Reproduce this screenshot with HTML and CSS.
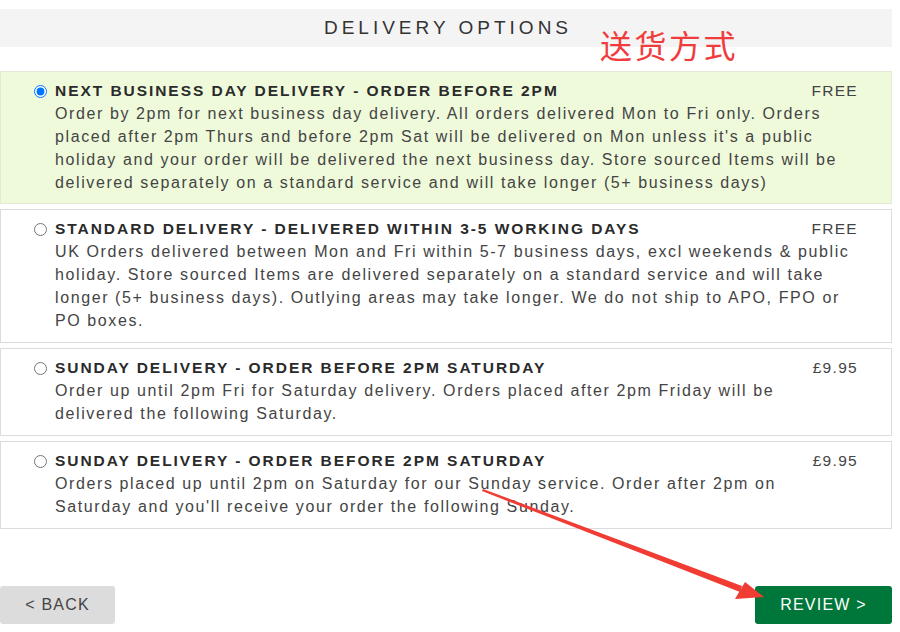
FILE: index.html
```html
<!DOCTYPE html>
<html>
<head>
<meta charset="utf-8">
<link rel="stylesheet" href="styles.css">
</head>
<body>
<div class="page">
  <div class="header">
    <h1 class="title">DELIVERY OPTIONS</h1>
  </div>
  <div class="note">送货方式</div>

  <div class="options">
    <label class="option selected">
      <input type="radio" name="del" class="radio" checked>
      <div class="content">
        <div class="head"><span class="name">NEXT BUSINESS DAY DELIVERY - ORDER BEFORE 2PM</span><span class="price">FREE</span></div>
        <p class="desc">Order by 2pm for next business day delivery. All orders delivered Mon to Fri only. Orders<br>placed after 2pm Thurs and before 2pm Sat will be delivered on Mon unless it's a public<br>holiday and your order will be delivered the next business day. Store sourced Items will be<br>delivered separately on a standard service and will take longer (5+ business days)</p>
      </div>
    </label>
    <label class="option">
      <input type="radio" name="del" class="radio">
      <div class="content">
        <div class="head"><span class="name">STANDARD DELIVERY - DELIVERED WITHIN 3-5 WORKING DAYS</span><span class="price">FREE</span></div>
        <p class="desc">UK Orders delivered between Mon and Fri within 5-7 business days, excl weekends &amp; public<br>holiday. Store sourced Items are delivered separately on a standard service and will take<br>longer (5+ business days). Outlying areas may take longer. We do not ship to APO, FPO or<br>PO boxes.</p>
      </div>
    </label>
    <label class="option">
      <input type="radio" name="del" class="radio">
      <div class="content">
        <div class="head"><span class="name">SUNDAY DELIVERY - ORDER BEFORE 2PM SATURDAY</span><span class="price">£9.95</span></div>
        <p class="desc">Order up until 2pm Fri for Saturday delivery. Orders placed after 2pm Friday will be<br>delivered the following Saturday.</p>
      </div>
    </label>
    <label class="option">
      <input type="radio" name="del" class="radio">
      <div class="content">
        <div class="head"><span class="name">SUNDAY DELIVERY - ORDER BEFORE 2PM SATURDAY</span><span class="price">£9.95</span></div>
        <p class="desc">Orders placed up until 2pm on Saturday for our Sunday service. Order after 2pm on<br>Saturday and you'll receive your order the following Sunday.</p>
      </div>
    </label>
  </div>

  <div class="actions">
    <button class="btn back">&lt; BACK</button>
    <button class="btn review">REVIEW &gt;</button>
  </div>

  <svg class="arrow" width="900" height="632" viewBox="0 0 900 632">
    <polygon points="482,491 483,489 742,586 740,592" fill="#f03c32"/>
    <polygon points="764,597 735,599 745,582" fill="#f03c32"/>
  </svg>
</div>
</body>
</html>
```
FILE: styles.css
```css
* { box-sizing: border-box; }
html, body { margin: 0; padding: 0; background: #fff; }
body { font-family: "Liberation Sans", Arial, sans-serif; color: #444; }
.page { position: relative; width: 900px; height: 632px; padding-top: 9px; }
.header {
  width: 892px; height: 38px; background: #f4f4f4;
  display: flex; align-items: center; justify-content: center;
}
.title {
  margin: 0; font-weight: normal; font-size: 19px; letter-spacing: 4px;
  color: #333; padding-left: 4px;
}
.note {
  position: absolute; left: 600px; top: 24px;
  font-family: "Noto Sans CJK SC", sans-serif; font-size: 32px; line-height: 40px;
  color: #f03c3c; letter-spacing: 2.5px;
}
.options { margin-top: 24px; width: 892px; display: flex; flex-direction: column; gap: 5px; }
.option {
  display: flex; align-items: flex-start;
  border: 1px solid #dcdcdc; background: #fff;
  padding: 8px 33px 10px 33px;
}
.option.selected { background: #effadb; border-color: #e0ead4; padding-bottom: 9px; }
.radio { margin: 5px 8px 0 0; width: 13px; height: 13px; flex: none; }
.content { flex: 1; }
.head { display: flex; justify-content: space-between; line-height: 22px; }
.name { font-weight: bold; font-size: 15.5px; letter-spacing: 1.95px; color: #2a2a2a; }
.price { font-size: 15.5px; letter-spacing: 1.3px; color: #444; }
.desc { margin: 0; font-size: 16px; line-height: 23px; letter-spacing: 1.6px; color: #444; }
.actions { margin-top: 57px; width: 892px; display: flex; justify-content: space-between; }
.btn {
  height: 38px; border: none; border-radius: 3px;
  font-family: "Liberation Sans", Arial, sans-serif; font-size: 16px; letter-spacing: 1.2px;
}
.back { width: 115px; background: #dcdcdc; color: #444; }
.review { width: 137px; background: #00773a; color: #fff; }
.arrow { position: absolute; left: 0; top: 0; pointer-events: none; }
```
